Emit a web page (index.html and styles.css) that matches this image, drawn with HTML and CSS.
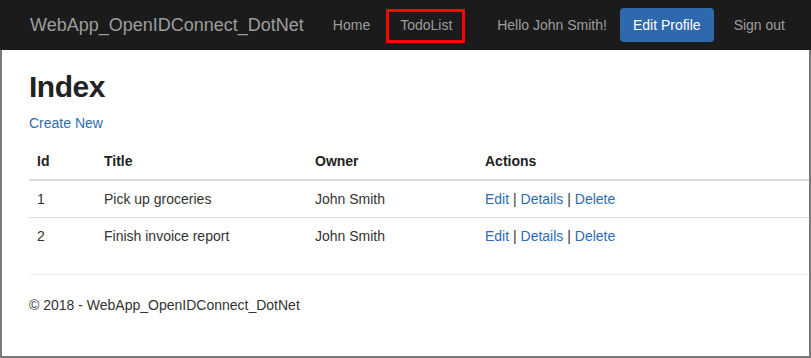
FILE: index.html
```html
<!DOCTYPE html>
<html lang="en">
<head>
    <meta charset="UTF-8">
    <meta name="viewport" content="width=device-width, initial-scale=1.0">
    <title>Index - WebApp_OpenIDConnect_DotNet</title>
    <link rel="stylesheet" href="styles.css">
</head>
<body>
    <div class="navbar">
        <a class="navbar-brand" href="#">WebApp_OpenIDConnect_DotNet</a>
        <ul class="nav">
            <li><a href="#">Home</a></li>
            <li><a href="#" class="marked">TodoList</a></li>
        </ul>
        <div class="nav-right">
            <span class="navbar-text">Hello John Smith!</span>
            <a href="#" class="btn btn-primary">Edit Profile</a>
            <a href="#" class="nav-link">Sign out</a>
        </div>
    </div>

    <div class="body-content">
        <h1>Index</h1>
        <p><a href="#">Create New</a></p>

        <table class="table">
            <thead>
                <tr>
                    <th class="col-id">Id</th>
                    <th class="col-title">Title</th>
                    <th class="col-owner">Owner</th>
                    <th>Actions</th>
                </tr>
            </thead>
            <tbody>
                <tr>
                    <td>1</td>
                    <td>Pick up groceries</td>
                    <td>John Smith</td>
                    <td><a href="#">Edit</a> | <a href="#">Details</a> | <a href="#">Delete</a></td>
                </tr>
                <tr>
                    <td>2</td>
                    <td>Finish invoice report</td>
                    <td>John Smith</td>
                    <td><a href="#">Edit</a> | <a href="#">Details</a> | <a href="#">Delete</a></td>
                </tr>
            </tbody>
        </table>

        <hr>
        <footer>
            <p>&copy; 2018 - WebApp_OpenIDConnect_DotNet</p>
        </footer>
    </div>
</body>
</html>
```

FILE: styles.css
```css
* {
    box-sizing: border-box;
}
body {
    margin: 0;
    font-family: 'Liberation Sans', Arial, sans-serif;
    font-size: 14px;
    line-height: 20px;
    color: #333333;
    background-color: #FFFFFF;
}
a {
    color: #2D6CB5;
    text-decoration: none;
}
.navbar {
    display: flex;
    align-items: center;
    height: 50px;
    padding: 0 11px 0 15px;
    background-color: #1B1B1B;
}
.navbar-brand {
    padding: 15px 14px 15px 15px;
    font-size: 18px;
    line-height: 20px;
    color: #9D9D9D;
}
.nav {
    display: flex;
    list-style: none;
    margin: 0;
    padding: 0;
}
.nav a,
.nav-link {
    position: relative;
    display: block;
    padding: 15px;
    color: #9D9D9D;
}
.nav a.marked::after {
    content: '';
    position: absolute;
    left: 1px;
    right: 2px;
    top: 9px;
    bottom: 7px;
    border: 3px solid #FF0000;
}
.nav-right {
    display: flex;
    align-items: center;
    margin-left: auto;
}
.navbar-text {
    color: #9D9D9D;
    margin-right: 13px;
}
.btn {
    display: inline-block;
    padding: 7px 13px;
    border-radius: 4px;
    line-height: 20px;
}
.btn-primary {
    background-color: #2F69AD;
    color: #FFFFFF;
    margin-right: 5px;
}
.body-content {
    height: 308px;
    padding: 0 0 0 27px;
    border: 2px solid #7A7A7A;
    border-top: none;
    overflow: hidden;
}
h1 {
    margin: 20px 0 9px;
    font-size: 30px;
    line-height: 34px;
    font-weight: bold;
    letter-spacing: -0.5px;
    color: #222222;
}
p {
    margin: 0 0 10px;
}
.table {
    width: 100%;
    border-collapse: collapse;
    margin-bottom: 20px;
}
.table th,
.table td {
    padding: 8px;
    text-align: left;
    vertical-align: top;
}
.table th {
    color: #222222;
    border-bottom: 2px solid #DDDDDD;
}
.table td {
    border-top: 1px solid #DDDDDD;
}
.col-id {
    width: 67px;
}
.col-title {
    width: 211px;
}
.col-owner {
    width: 170px;
}
hr {
    margin: 20px 0;
    border: 0;
    border-top: 1px solid #EEEEEE;
}
```
